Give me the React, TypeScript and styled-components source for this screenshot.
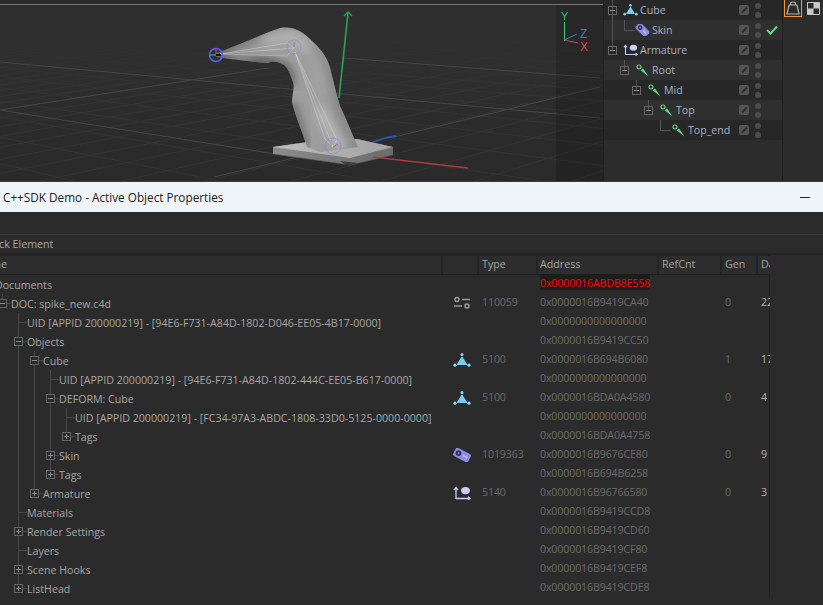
import styled, {createGlobalStyle} from 'styled-components';

const GlobalStyle = createGlobalStyle`
    html, body {
        margin: 0;
        padding: 0;
        background: #2b2b2b;
    }
    * {
        box-sizing: border-box;
    }
`;

const uiFont = `"Open Sans", "Noto Sans", "Liberation Sans", sans-serif`;

const Page = styled.div`
    width: 823px;
    height: 605px;
    overflow: hidden;
    display: flex;
    flex-direction: column;
    font-family: ${uiFont};
    background: #2b2b2b;
`;
const TopArea = styled.div`
    height: 182px;
    display: flex;
    flex: none;
    border-bottom: 1px solid #3a3a3a;
`;
const Viewport = styled.div`
    width: 603px;
    flex: none;
    padding-top: 4px;
    background: #2b2b2b;
    & svg {
        display: block;
    }
`;
const ObjectManager = styled.div`
    width: 180px;
    flex: none;
    display: flex;
    flex-direction: column;
    background: #2c2c2c;
    border-left: 1px solid #202020;
    border-right: 1px solid #202020;
`;
const ObjectRow = styled.div<{$odd: boolean}>`
    height: 20px;
    flex: none;
    display: flex;
    align-items: center;
    background: ${(props) => (props.$odd ? '#2f2f2f' : '#272727')};
`;
const ObjectTree = styled.div`
    width: 135px;
    flex: none;
    display: flex;
    align-items: center;
    height: 100%;
    padding-left: 4px;
`;
const ObjectName = styled.span`
    font-size: 10.6px;
    color: #a9b1c4;
    margin-left: 2px;
    white-space: nowrap;
`;
const ObjectSlot = styled.span<{$width: number; $line: 'full' | 'half' | 'none'; $arm?: boolean}>`
    width: ${(props) => props.$width}px;
    height: 20px;
    flex: none;
    position: relative;
    &::before {
        content: '';
        display: ${(props) => (props.$line === 'none' ? 'none' : 'block')};
        position: absolute;
        left: 4px;
        top: 0;
        height: ${(props) => (props.$line === 'full' ? '20px' : '10px')};
        width: 1px;
        background: #555;
    }
    &::after {
        content: '';
        display: ${(props) => (props.$arm ? 'block' : 'none')};
        position: absolute;
        left: 4px;
        right: 0;
        top: 10px;
        height: 1px;
        background: #555;
    }
`;
const ObjectIcon = styled.span`
    width: 15px;
    height: 14px;
    flex: none;
    display: flex;
    align-items: center;
    justify-content: center;
`;
const FlagCol = styled.div`
    flex: none;
    display: flex;
    align-items: center;
    gap: 6px;
`;
const Flag = styled.span`
    width: 10px;
    height: 10px;
    border-radius: 2px;
    background: #545454;
    display: flex;
    align-items: center;
    justify-content: center;
    &::after {
        content: '';
        width: 7px;
        height: 2px;
        background: #2a2a2a;
        transform: rotate(-45deg);
    }
`;
const Dots = styled.span`
    display: flex;
    flex-direction: column;
    gap: 3px;
`;
const Dot = styled.span`
    width: 6px;
    height: 6px;
    border-radius: 50%;
    background: #4c4c4c;
`;
const CheckMark = styled.span`
    width: 12px;
    height: 10px;
    margin-left: -1px;
    display: flex;
`;
const SidePanel = styled.div`
    flex: 1;
    display: flex;
    align-items: flex-start;
    gap: 5px;
    padding-left: 1px;
    background: #2c2c2c;
`;
const BagButton = styled.span`
    width: 18px;
    height: 17px;
    border: 1px solid #f09a32;
    border-top: none;
    display: flex;
    align-items: center;
    justify-content: center;
`;
const Checker = styled.span`
    margin-top: 2px;
    width: 13px;
    height: 13px;
    display: flex;
`;
const TitleBar = styled.div`
    height: 30px;
    flex: none;
    background: #eff4f9;
    display: flex;
    align-items: center;
    justify-content: space-between;
    padding: 0 13px 0 3px;
    color: #1c1c1c;
    font-size: 11.75px;
`;
const MinimizeButton = styled.span`
    width: 10px;
    height: 1px;
    background: #222;
`;
const Panel = styled.div`
    flex: 1;
    padding-top: 22px;
    background: #2b2b2b;
    overflow: hidden;
`;
const CommandBar = styled.div`
    height: 21px;
    border-top: 1px solid #3a3a3a;
    border-bottom: 2px solid #242424;
    display: flex;
    align-items: center;
    font-size: 10.7px;
    color: #a9a9a9;
    overflow: hidden;
`;
const ClippedLabel = styled.span<{$shift: number}>`
    margin-left: ${(props) => props.$shift}px;
    white-space: nowrap;
`;
const Table = styled.div`
    width: 770px;
    border-right: 1px solid #202020;
`;
const columns = '441px 34px 57px 119px 61px 34px 12px';
const HeaderRow = styled.div`
    display: grid;
    grid-template-columns: ${columns};
    column-gap: 2px;
    height: 20px;
    padding-top: 1px;
    background: #242424;
    border-bottom: 1px solid #202020;
`;
const HeaderCell = styled.div<{$pad?: number}>`
    background: #2d2d2d;
    color: #a3a3a3;
    font-size: 10.7px;
    line-height: 17px;
    padding-left: ${(props) => props.$pad ?? 3}px;
    overflow: hidden;
    white-space: nowrap;
`;
const BodyRow = styled.div`
    display: grid;
    grid-template-columns: ${columns};
    column-gap: 2px;
    height: 19px;
    font-size: 10.65px;
    line-height: 19px;
`;
const NameCell = styled.div`
    overflow: hidden;
    display: flex;
    height: 19px;
    color: #a6a6a6;
    white-space: nowrap;
`;
const NameTrack = styled.div`
    display: flex;
    margin-left: -21px;
    & > span:last-child {
        padding-top: 1px;
    }
`;
const Slot = styled.span<{$line: 'full' | 'half' | 'none'; $arm: boolean}>`
    width: 16px;
    height: 19px;
    flex: none;
    position: relative;
    &::before {
        content: '';
        display: ${(props) => (props.$line === 'none' ? 'none' : 'block')};
        position: absolute;
        left: 7px;
        top: 0;
        height: ${(props) => (props.$line === 'full' ? '19px' : '10px')};
        width: 1px;
        background: #484848;
    }
    &::after {
        content: '';
        display: ${(props) => (props.$arm ? 'block' : 'none')};
        position: absolute;
        left: 7px;
        right: 0;
        top: 9px;
        height: 1px;
        background: #484848;
    }
`;
const Expander = styled.span<{$open: boolean}>`
    position: absolute;
    z-index: 1;
    left: 3px;
    top: 5px;
    width: 9px;
    height: 9px;
    border: 1px solid #666;
    background: #2b2b2b;
    &::before {
        content: '';
        position: absolute;
        left: 1px;
        right: 1px;
        top: 3px;
        height: 1px;
        background: #8a8a8a;
    }
    &::after {
        content: '';
        display: ${(props) => (props.$open ? 'none' : 'block')};
        position: absolute;
        top: 1px;
        bottom: 1px;
        left: 3px;
        width: 1px;
        background: #8a8a8a;
    }
`;
const ObjectExpander = styled(Expander)`
    left: 0;
    top: 6px;
    background: transparent;
`;
const IconCell = styled.div`
    display: flex;
    align-items: center;
    justify-content: center;
    padding-left: 4px;
    margin-top: -1px;
`;
const DimCell = styled.div<{$pad?: number}>`
    color: #6b6b6b;
    margin-top: -1px;
    height: 19px;
    padding-left: ${(props) => props.$pad ?? 3}px;
    letter-spacing: -0.14px;
    overflow: hidden;
    white-space: nowrap;
`;
const BrightCell = styled(DimCell)`
    color: #b5b5b5;
    letter-spacing: 0;
`;
const AlertAddress = styled.span`
    display: inline-block;
    background: #1d1d1d;
    color: #ff0000;
    height: 16px;
    line-height: 19px;
    vertical-align: top;
`;

function CubeGlyph({size = 18}: {size?: number}) {
    return (
        <svg width={size} height={size * 0.78} viewBox="0 0 18 14">
            <polygon points="9,3 14.5,12 3.5,12" fill="#74cdf5" />
            <circle cx="9" cy="1.6" r="1.5" fill="#8ad8fa" />
            <circle cx="2" cy="12.2" r="1.6" fill="#8ad8fa" />
            <circle cx="16" cy="12.2" r="1.6" fill="#8ad8fa" />
        </svg>
    );
}

function SettingsGlyph() {
    return (
        <svg width="18" height="14" viewBox="0 0 18 14" fill="none" stroke="#a0a0a0" strokeWidth="1.4">
            <circle cx="4" cy="3.5" r="2" />
            <path d="M9 3.5h8" />
            <path d="M1 10h8" />
            <circle cx="14" cy="10" r="2" />
        </svg>
    );
}

function SkinGlyph({size = 18, tilt = 28}: {size?: number; tilt?: number}) {
    return (
        <svg width={size} height={size * 0.78} viewBox="0 0 18 14">
            <g transform={`rotate(${tilt} 9 7)`}>
                <rect x="0.5" y="2.5" width="17" height="9" rx="2" fill="#8c8ce8" />
                <circle cx="5" cy="7" r="2.8" fill="#2b2b2b" />
                <circle cx="5" cy="7" r="1.1" fill="#8c8ce8" />
                <rect x="10" y="6" width="5" height="2" fill="#b6b6f2" />
            </g>
        </svg>
    );
}

function ArmatureGlyph({size = 18}: {size?: number}) {
    return (
        <svg width={size} height={size * 0.78} viewBox="0 0 18 14" fill="none" stroke="#c6cdf8" strokeWidth="1.3">
            <path d="M3 13V2M1 4l2-2.4L5 4" />
            <path d="M3 12.5h14M15 10.6l2 1.9-2 1.4" />
            <ellipse cx="12.5" cy="4.6" rx="4.4" ry="3.6" fill="#c6cdf8" stroke="none" />
        </svg>
    );
}

function BoneGlyph() {
    return (
        <svg width="13" height="13" viewBox="0 0 13 13">
            <circle cx="3" cy="3" r="2" fill="none" stroke="#62dc86" strokeWidth="1.2" />
            <polygon points="4.6,6.2 7,4.4 12.6,12.6" fill="#62dc86" />
        </svg>
    );
}

interface ObjectItem {
    name: string;
    depth: number;
    kind: string;
    open?: boolean;
    guide?: boolean;
    own: 'full' | 'half';
    check?: boolean;
}

const objects: ObjectItem[] = [
    {name: 'Cube', depth: 0, kind: 'cube', open: true, own: 'full'},
    {name: 'Skin', depth: 1, kind: 'skin', guide: true, own: 'half', check: true},
    {name: 'Armature', depth: 0, kind: 'armature', open: true, own: 'half'},
    {name: 'Root', depth: 1, kind: 'bone', open: true, own: 'half'},
    {name: 'Mid', depth: 2, kind: 'bone', open: true, own: 'half'},
    {name: 'Top', depth: 3, kind: 'bone', open: true, own: 'half'},
    {name: 'Top_end', depth: 4, kind: 'bone', own: 'half'},
];

type TreeLine = 'full' | 'half' | 'none';

interface TreeRow {
    name: string;
    depth: number;
    guides: number[];
    own: TreeLine;
    open?: boolean;
    icon?: 'settings' | 'cube' | 'skin' | 'armature';
    type?: string;
    gen?: string;
    data?: string;
    address: string;
}

const rows: TreeRow[] = [
    {name: 'Documents', depth: 0, guides: [], own: 'none', address: '0x0000016ABDB8E558'},
    {name: 'DOC: spike_new.c4d', depth: 1, guides: [], own: 'half', open: true, icon: 'settings', type: '110059', gen: '0', data: '224', address: '0x0000016B9419CA40'},
    {name: 'UID [APPID 200000219] - [94E6-F731-A84D-1802-D046-EE05-4B17-0000]', depth: 2, guides: [], own: 'full', address: '0x0000000000000000'},
    {name: 'Objects', depth: 2, guides: [], own: 'full', open: true, address: '0x0000016B9419CC50'},
    {name: 'Cube', depth: 3, guides: [2], own: 'full', open: true, icon: 'cube', type: '5100', gen: '1', data: '17', address: '0x0000016B694B6080'},
    {name: 'UID [APPID 200000219] - [94E6-F731-A84D-1802-444C-EE05-B617-0000]', depth: 4, guides: [2, 3], own: 'full', address: '0x0000000000000000'},
    {name: 'DEFORM: Cube', depth: 4, guides: [2, 3], own: 'full', open: true, icon: 'cube', type: '5100', gen: '0', data: '4', address: '0x0000016BDA0A4580'},
    {name: 'UID [APPID 200000219] - [FC34-97A3-ABDC-1808-33D0-5125-0000-0000]', depth: 5, guides: [2, 3, 4], own: 'full', address: '0x0000000000000000'},
    {name: 'Tags', depth: 5, guides: [2, 3, 4], own: 'half', open: false, address: '0x0000016BDA0A4758'},
    {name: 'Skin', depth: 4, guides: [2, 3], own: 'full', open: false, icon: 'skin', type: '1019363', gen: '0', data: '9', address: '0x0000016B9676CE80'},
    {name: 'Tags', depth: 4, guides: [2, 3], own: 'half', open: false, address: '0x0000016B694B6258'},
    {name: 'Armature', depth: 3, guides: [2], own: 'half', open: false, icon: 'armature', type: '5140', gen: '0', data: '3', address: '0x0000016B96766580'},
    {name: 'Materials', depth: 2, guides: [], own: 'full', address: '0x0000016B9419CCD8'},
    {name: 'Render Settings', depth: 2, guides: [], own: 'full', open: false, address: '0x0000016B9419CD60'},
    {name: 'Layers', depth: 2, guides: [], own: 'full', address: '0x0000016B9419CF80'},
    {name: 'Scene Hooks', depth: 2, guides: [], own: 'full', open: false, address: '0x0000016B9419CEF8'},
    {name: 'ListHead', depth: 2, guides: [], own: 'half', open: false, address: '0x0000016B9419CDE8'},
];

// 바닥 그리드: 소실점 두 개로 원근 격자를 만든다
const vanishA = {x: -716, y: -5};
const vanishB = {x: 1427, y: -114};
const origin = {x: 333, y: 150};

function gridLines() {
    const p = 0.045;
    const q = 0.05;
    const lines: {x1: number; y1: number; x2: number; y2: number}[] = [];
    const extend = (ax: number, ay: number, vx: number, vy: number) => {
        const dx = ax - vx;
        const dy = ay - vy;
        lines.push({x1: vx, y1: vy, x2: ax + dx * 4, y2: ay + dy * 4});
    };
    for (let i = -21; i < 60; i++) {
        const d = 1 + i * p;
        extend((origin.x + i * p * vanishA.x) / d, (origin.y + i * p * vanishA.y) / d, vanishB.x, vanishB.y);
    }
    for (let j = -19; j < 60; j++) {
        const d = 1 + j * q;
        extend((origin.x + j * q * vanishB.x) / d, (origin.y + j * q * vanishB.y) / d, vanishA.x, vanishA.y);
    }
    return lines;
}

const majorLines = [
    'M0 62L600 118',
    'M0 110L300 158',
    'M0 110L268 68',
    'M214 177L298 157',
    'M394 137L600 87',
    'M344 58L600 78',
];

function Scene() {
    const outline = 'M216 53C235 47 262 34 280 28C292 26 302 30 313 42C322 50 329 60 331 72C334 84 337 96 340 106C347 120 352 134 358 147L320 152L307 147C302 130 296 118 292 102C292 94 295 88 293 82C290 74 288 68 284 65C278 62 274 60 268 63C256 62 236 60 216 57Z';
    return (
        <svg width="603" height="177" viewBox="0 4 603 177">
            <defs>
                <linearGradient id="floor" x1="0" y1="0" x2="0" y2="1">
                    <stop offset="0" stopColor="#2f2f2f" />
                    <stop offset="1" stopColor="#2a2a2a" />
                </linearGradient>
                <linearGradient id="horizonFade" x1="0" y1="0" x2="0" y2="1">
                    <stop offset="0.35" stopColor="#2f2f2f" stopOpacity="1" />
                    <stop offset="1" stopColor="#2f2f2f" stopOpacity="0" />
                </linearGradient>
                <linearGradient id="limb" x1="0" y1="0" x2="1" y2="0.15">
                    <stop offset="0" stopColor="#5a5a5a" />
                    <stop offset="0.45" stopColor="#9a9a9a" />
                    <stop offset="0.75" stopColor="#a4a4a4" />
                    <stop offset="1" stopColor="#8c8c8c" />
                </linearGradient>
                <linearGradient id="plateTop" x1="0" y1="0" x2="1" y2="0">
                    <stop offset="0" stopColor="#bdbdbd" />
                    <stop offset="1" stopColor="#a2a2a2" />
                </linearGradient>
                <linearGradient id="plateSide" x1="0" y1="0" x2="1" y2="0">
                    <stop offset="0" stopColor="#8c8c8c" />
                    <stop offset="0.6" stopColor="#787878" />
                    <stop offset="1" stopColor="#6c6c6c" />
                </linearGradient>
                <filter id="soft" x="-30%" y="-30%" width="160%" height="160%">
                    <feGaussianBlur stdDeviation="5" />
                </filter>
                <clipPath id="limbClip">
                    <path d={outline} />
                </clipPath>
            </defs>
            <rect x="0" y="4" width="603" height="177" fill="url(#floor)" />
            <g stroke="#363636" strokeWidth="0.8">
                {gridLines().map((l, i) => (
                    <line key={i} x1={l.x1} y1={l.y1} x2={l.x2} y2={l.y2} />
                ))}
            </g>
            <rect x="0" y="4" width="603" height="100" fill="url(#horizonFade)" />
            <rect x="0" y="4" width="603" height="1" fill="#767676" />
            <g stroke="#464646" strokeWidth="1" fill="none">
                {majorLines.map((d) => (
                    <path key={d} d={d} />
                ))}
            </g>
            <rect x="556" y="5" width="47" height="176" fill="#000" opacity="0.14" />

            <polygon points="273,147 322,140 357,139 393,147 393,155 350,165 273,154" fill="url(#plateSide)" />
            <polygon points="273,147 322,140 357,139 393,147 350,158" fill="url(#plateTop)" />
            <path d="M273 154L350 165L393 155" stroke="#555" strokeWidth="0.6" fill="none" />
            <polygon points="340,161 358,163 352,165 346,165" fill="#3c3c3c" />

            <path d={outline} fill="url(#limb)" />
            <g clipPath="url(#limbClip)">
                <path d="M216 55L280 36L300 40L312 60L318 95L340 150L306 150L296 100L299 78L288 58Z" fill="#9e9e9e" filter="url(#soft)" />
                <path d="M250 62L272 62L287 68L293 84" stroke="#3a3a3a" strokeWidth="5" fill="none" filter="url(#soft)" />
                <path d="M292 102L306 148" stroke="#5a5a5a" strokeWidth="6" fill="none" filter="url(#soft)" />
                <path d="M316 44L332 76L345 116" stroke="#7a7a7a" strokeWidth="5" fill="none" filter="url(#soft)" />
                <path d="M262 40L292 36L306 50" stroke="#c0c0c0" strokeWidth="6" fill="none" filter="url(#soft)" />
                <path d="M318 108L344 150" stroke="#b4b4b4" strokeWidth="12" fill="none" filter="url(#soft)" />
            </g>

            <g stroke="#d8d8d8" strokeOpacity="0.45" strokeWidth="1" fill="none">
                <path d="M220 54L288 43L294 48L287 56Z" />
                <path d="M220 54L294 48" />
                <path d="M295 52L325 139L333 147L337 140Z" />
                <path d="M295 52L333 147" />
            </g>

            <circle cx="216" cy="55" r="6.5" fill="none" stroke="#5a60f0" strokeWidth="1.5" />
            <path d="M216 55V49" stroke="#e04040" strokeWidth="1.2" />
            <path d="M216 55H210" stroke="#30c060" strokeWidth="1.2" />
            <path d="M216 55H221" stroke="#101010" strokeWidth="2" />
            <circle cx="294" cy="47" r="7" fill="none" stroke="#8088e8" strokeOpacity="0.7" />
            <path d="M294 47V42" stroke="#c05050" strokeOpacity="0.7" />
            <circle cx="333" cy="146" r="8" fill="none" stroke="#8088e8" strokeOpacity="0.7" />
            <path d="M331 146V140" stroke="#60b070" strokeOpacity="0.8" />
            <path d="M333 147L338 144" stroke="#c05050" strokeOpacity="0.7" />

            <path d="M339 98L348 13" stroke="#28a35c" strokeWidth="1.6" />
            <path d="M344 16L348 12L352 16" stroke="#28a35c" strokeWidth="1.3" fill="none" />
            <path d="M373 142L385 138L396 136" stroke="#2858b8" strokeWidth="1.8" fill="none" />
            <path d="M373 157L468 168" stroke="#b03a3a" strokeWidth="1.6" />

            <path d="M564.5 41V22" stroke="#2fd070" strokeWidth="1" />
            <path d="M564.5 40L577 34" stroke="#3a78e0" strokeWidth="1" />
            <path d="M564.5 40L578 43" stroke="#d84848" strokeWidth="1" />
            <text x="561" y="20" fontSize="11" fill="#2fc070" fontFamily="Liberation Sans">Y</text>
            <text x="580" y="38" fontSize="12" fill="#3a78e0" fontFamily="Liberation Sans">Z</text>
            <text x="580" y="51" fontSize="12" fill="#d84848" fontFamily="Liberation Sans">X</text>
        </svg>
    );
}

function objectGlyph(kind: string) {
    if (kind === 'cube') return <CubeGlyph size={15} />;
    if (kind === 'skin') return <SkinGlyph size={15} tilt={45} />;
    if (kind === 'armature') return <ArmatureGlyph size={15} />;
    return <BoneGlyph />;
}

function rowGlyph(icon?: TreeRow['icon']) {
    if (icon === 'settings') return <SettingsGlyph />;
    if (icon === 'cube') return <CubeGlyph />;
    if (icon === 'skin') return <SkinGlyph />;
    if (icon === 'armature') return <ArmatureGlyph />;
    return null;
}

function App() {
    return (
        <Page>
            <GlobalStyle />
            <TopArea>
                <Viewport>
                    <Scene />
                </Viewport>
                <ObjectManager>
                    {objects.map((o, i) => (
                        <ObjectRow key={o.name} $odd={i % 2 === 1}>
                            <ObjectTree>
                                {Array.from({length: o.depth}, (_, s) => (
                                    <ObjectSlot key={s} $width={12} $line={o.guide && s === 0 ? 'full' : 'none'} />
                                ))}
                                <ObjectSlot $width={15} $line={o.own} $arm={o.open === undefined}>
                                    {o.open !== undefined && <ObjectExpander $open={o.open} />}
                                </ObjectSlot>
                                <ObjectIcon>{objectGlyph(o.kind)}</ObjectIcon>
                                <ObjectName>{o.name}</ObjectName>
                            </ObjectTree>
                            <FlagCol>
                                <Flag />
                                <Dots>
                                    <Dot />
                                    <Dot />
                                </Dots>
                                {o.check && (
                                    <CheckMark>
                                        <svg width="12" height="10" viewBox="0 0 12 10" fill="none" stroke="#5fd888" strokeWidth="2">
                                            <path d="M1 5l3.5 3.5L11 1.5" />
                                        </svg>
                                    </CheckMark>
                                )}
                            </FlagCol>
                        </ObjectRow>
                    ))}
                </ObjectManager>
                <SidePanel>
                    <BagButton>
                        <svg width="14" height="14" viewBox="0 0 14 14" fill="none" stroke="#b4b4b4" strokeWidth="1.2">
                            <path d="M3 4h8l2 9H1z" />
                            <path d="M4.5 4V2.5a2.5 1.5 0 0 1 5 0V4" />
                        </svg>
                    </BagButton>
                    <Checker>
                        <svg width="13" height="13" viewBox="0 0 13 13">
                            <rect width="13" height="13" rx="1" fill="#c8c8c8" />
                            <rect x="1" y="1" width="5.5" height="5.5" fill="#2a2a2a" />
                            <rect x="6.5" y="6.5" width="5.5" height="5.5" fill="#2a2a2a" />
                        </svg>
                    </Checker>
                </SidePanel>
            </TopArea>
            <TitleBar>
                <span>C++SDK Demo - Active Object Properties</span>
                <MinimizeButton />
            </TitleBar>
            <Panel>
                <CommandBar>
                    <ClippedLabel $shift={-13}>Lock Element</ClippedLabel>
                </CommandBar>
                <Table>
                    <HeaderRow>
                        <HeaderCell $pad={0}><ClippedLabel $shift={-23}>Name</ClippedLabel></HeaderCell>
                        <HeaderCell />
                        <HeaderCell>Type</HeaderCell>
                        <HeaderCell $pad={2}>Address</HeaderCell>
                        <HeaderCell>RefCnt</HeaderCell>
                        <HeaderCell>Gen</HeaderCell>
                        <HeaderCell>Data</HeaderCell>
                    </HeaderRow>
                    {rows.map((r, i) => (
                        <BodyRow key={i}>
                            <NameCell>
                                <NameTrack>
                                    {Array.from({length: r.depth}, (_, s) => (
                                        <Slot key={s} $line={r.guides.includes(s) ? 'full' : 'none'} $arm={false} />
                                    ))}
                                    <Slot $line={r.own} $arm={r.depth > 0}>
                                        {r.open !== undefined && <Expander $open={r.open} />}
                                    </Slot>
                                    <span>{r.name}</span>
                                </NameTrack>
                            </NameCell>
                            <IconCell>{rowGlyph(r.icon)}</IconCell>
                            <DimCell>{r.type}</DimCell>
                            <DimCell $pad={2}>
                                {i === 0 ? <AlertAddress>{r.address}</AlertAddress> : r.address}
                            </DimCell>
                            <DimCell />
                            <DimCell>{r.gen}</DimCell>
                            <BrightCell>{r.data}</BrightCell>
                        </BodyRow>
                    ))}
                </Table>
            </Panel>
        </Page>
    );
}

export default App;
